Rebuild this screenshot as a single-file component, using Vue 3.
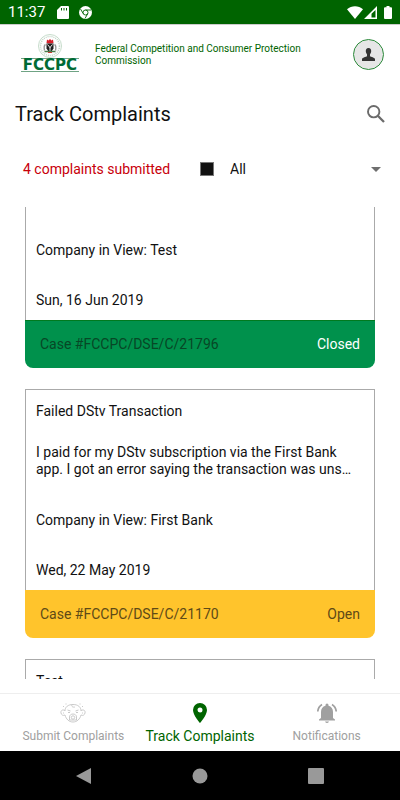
<template>
  <div class="screen">
    <div class="status-bar">
      <span class="status-time">11:37</span>
      <svg class="status-sd" width="12" height="13" viewBox="0 0 12 13">
        <path fill="#fff" fill-rule="evenodd" d="M4 0h7a1 1 0 0 1 1 1v11a1 1 0 0 1-1 1H1a1 1 0 0 1-1-1V4zM4 2v2.500h1V2zm2.500 0v2.500h1V2zM9 2v2.500h1V2z" />
      </svg>
      <svg width="13" height="13" viewBox="0 0 13 13">
        <circle cx="6.500" cy="6.500" r="6.500" fill="#fff" />
        <circle cx="6.500" cy="6.500" r="2.500" fill="none" stroke="#006400" stroke-width="0.900" />
        <path d="M6.500 4H12M4.300 7.700L1.500 3M8.700 7.700L6 12.500" stroke="#006400" stroke-width="0.900" fill="none" />
      </svg>
      <span class="spacer"></span>
      <svg class="status-wifi" width="16" height="13" viewBox="0 0 16 13">
        <path fill="#fff" d="M8 13L0 3.200C4.500-.8 11.500-.8 16 3.200z" />
      </svg>
      <svg class="status-signal" width="13" height="13" viewBox="0 0 13 13">
        <path fill="#fff" fill-rule="evenodd" d="M13 0v13H0zM11.500 4L7.500 7.800v3.700h4z" />
      </svg>
      <svg width="8" height="13" viewBox="0 0 8 13">
        <path fill="#fff" d="M2.500 0h3v1.300H7a1 1 0 0 1 1 1V12a1 1 0 0 1-1 1H1a1 1 0 0 1-1-1V2.300a1 1 0 0 1 1-1h1.500z" />
      </svg>
    </div>

    <header class="header">
      <div class="logo" role="img" aria-label="FCCPC">
        <svg width="26" height="24" viewBox="0 0 26 24">
          <circle cx="13" cy="12" r="11.500" fill="#fff" stroke="#c6dccb" />
          <circle cx="13" cy="12" r="9.500" fill="none" stroke="#c3d6c7" stroke-width="1.500" stroke-dasharray="1 1" />
          <path d="M10 5.500l1.500 1L13 5l1.500 1.500 1.500-1 .5 3.500-2 .5h-3l-2-.5z" fill="#d5202b" />
          <path d="M9.500 9.500h7v5q-1 2.500-3.500 3.500-2.500-1-3.500-3.500z" fill="#1f1f1f" />
          <path d="M10.500 10.500L13 13.500l2.500-3M13 13v4.500" stroke="#fff" stroke-width="0.900" fill="none" />
          <path d="M8.500 10.500q-2 1-1 6M17.500 10.500q2 1 1 6" stroke="#999" stroke-width="1.400" fill="none" />
          <path d="M7.500 17.500h11" stroke="#497b48" stroke-width="1.500" />
          <path d="M11 18.500h4" stroke="#c43b32" />
        </svg>
        <span class="logo-text">FCCPC</span>
      </div>
      <span class="org-name">Federal Competition and Consumer Protection Commission</span>
      <button type="button" class="avatar" aria-label="Profile">
        <svg width="13" height="13" viewBox="0 0 13 13">
          <path fill="#333" d="M6.500 0C8.500 0 9.300 1.400 9.200 3.200 9.100 4.800 8.500 5.600 8 6.200v2c1 1 4.600 1 5 2.800v2H0v-2c.4-1.800 4-1.800 5-2.800v-2C4.500 5.600 3.900 4.800 3.800 3.200 3.700 1.400 4.500 0 6.500 0z" />
        </svg>
      </button>
    </header>

    <div class="title-row">
      <h1>Track Complaints</h1>
      <button type="button" class="icon-button" aria-label="Search">
        <svg width="18" height="18" viewBox="0 0 18 18">
          <circle cx="6.700" cy="6.700" r="5.700" fill="none" stroke="#6b6b6b" stroke-width="1.900" />
          <path d="M10.800 10.800L17 17" stroke="#6b6b6b" stroke-width="2.300" />
        </svg>
      </button>
    </div>

    <div class="filter-row">
      <span class="count">{{ total }} complaints submitted</span>
      <span class="swatch"></span>
      <div class="select-wrap">
        <select v-model="filter" aria-label="Filter by status">
          <option v-for="option in options" :key="option" :value="option">{{ option }}</option>
        </select>
        <svg class="caret" width="10" height="5" viewBox="0 0 10 5">
          <path fill="#6f6f6f" d="M0 0h10L5 5z" />
        </svg>
      </div>
    </div>

    <main ref="list" class="list">
      <article v-for="(item, index) in visible" :key="index" class="card">
        <div class="card-body">
          <h2>{{ item.title }}</h2>
          <p class="description">{{ item.description }}</p>
          <p v-if="item.company" class="company">Company in View: {{ item.company }}</p>
          <p class="date">{{ item.date }}</p>
        </div>
        <div v-if="item.caseNo" class="card-footer" :class="`card-footer--${item.status.toLowerCase()}`">
          <span>Case #{{ item.caseNo }}</span>
          <span class="status">{{ item.status }}</span>
        </div>
      </article>
    </main>

    <nav class="tabs">
      <a href="#submit" class="tab">
        <svg width="26" height="20" viewBox="0 0 26 20" fill="none" stroke="#c4c4c4" stroke-width="0.900">
          <path d="M5 8C5 4 8 1.500 13 1.500S21 4 21 8M5 7.500C2 6 .5 8 1 10s2 3 4 2M21 7.500c3-1.500 4.500.5 4 2.500s-2 3-4 2M5 12c1 4 4 7 8 7s7-3 8-7" />
          <path d="M12 1.500c-1 2 1 3 3 2.500M7.500 7l3 1M18.500 7l-3 1M8 9.500h2M16 9.500h2" />
          <path d="M9.500 17v-3c0-4 7-4 7 0v3z" />
          <circle cx="13" cy="14.500" r="1.700" />
          <path d="M3 3l1 1M23 3l-1 1M6 .5v1M20 .5v1M3 10h1M22 10h1" />
        </svg>
        <span>Submit Complaints</span>
      </a>
      <a href="#track" class="tab tab--active" aria-current="page">
        <svg width="14" height="20" viewBox="0 0 14 20">
          <path fill="#006400" fill-rule="evenodd" d="M7 0a7 7 0 0 0-7 7c0 5.200 7 13 7 13s7-7.800 7-13a7 7 0 0 0-7-7zm0 4.500a2.500 2.500 0 1 1 0 5 2.500 2.500 0 0 1 0-5z" />
        </svg>
        <span>Track Complaints</span>
      </a>
      <a href="#notifications" class="tab">
        <svg width="20" height="20" viewBox="0 0 20 20">
          <path fill="#a0a0a0" d="M10 20a2 2 0 0 0 2-1.500H8A2 2 0 0 0 10 20zM16 15V9c0-3-1.600-5.600-4.500-6.200v-.8a1.500 1.500 0 0 0-3 0v.8C5.600 3.400 4 6 4 9v6l-2 1.500v1h16v-1z" />
          <path d="M5 1.500Q1 4 .8 8.500M15 1.500q4 2.500 4.200 7" fill="none" stroke="#a0a0a0" stroke-width="1.700" />
        </svg>
        <span>Notifications</span>
      </a>
    </nav>

    <div class="system-nav">
      <button type="button" aria-label="Back">
        <svg width="16" height="16" viewBox="0 0 16 16"><path fill="#999" d="M15 0v16L0 8z" /></svg>
      </button>
      <button type="button" aria-label="Home">
        <svg width="16" height="16" viewBox="0 0 16 16"><circle cx="8" cy="8" r="7.500" fill="#999" /></svg>
      </button>
      <button type="button" aria-label="Recent apps">
        <svg width="16" height="16" viewBox="0 0 16 16"><rect width="16" height="16" rx="1" fill="#999" /></svg>
      </button>
    </div>
  </div>
</template>

<script setup>
import { computed, onMounted, ref } from 'vue'

const complaints = [
  {
    company: 'Test',
    date: 'Sun, 16 Jun 2019',
    caseNo: 'FCCPC/DSE/C/21796',
    status: 'Closed'
  },
  {
    title: 'Failed DStv Transaction',
    description: 'I paid for my DStv subscription via the First Bank app. I got an error saying the transaction was uns…',
    company: 'First Bank',
    date: 'Wed, 22 May 2019',
    caseNo: 'FCCPC/DSE/C/21170',
    status: 'Open'
  },
  {
    title: 'Test'
  }
]

const options = ['All', 'Open', 'Closed']
const total = 4
const filter = ref('All')
const list = ref(null)

const visible = computed(() =>
  filter.value === 'All' ? complaints : complaints.filter((item) => item.status === filter.value)
)

onMounted(() => {
  list.value.scrollTop = 88
})
</script>

<style>
body {
  margin: 0;
  background: #fff;
}
</style>

<style scoped>
.screen {
  display: flex;
  flex-direction: column;
  height: 100vh;
  font-family: Roboto, 'Liberation Sans', sans-serif;
  font-size: 14px;
  line-height: 17px;
  color: #111;
  background: #fff;
}

button {
  display: flex;
  align-items: center;
  justify-content: center;
  padding: 0;
  border: none;
  background: none;
  cursor: pointer;
}

.status-bar {
  display: flex;
  align-items: center;
  flex: none;
  height: 24px;
  padding: 0 8px;
  background: #006400;
  color: #fff;
}

.status-time {
  font-size: 15px;
}

.status-sd {
  margin: 0 10px 0 12px;
}

.spacer {
  flex: 1;
}

.status-signal {
  margin: 0 7px 0 1px;
}

.header {
  display: flex;
  align-items: center;
  flex: none;
  height: 60px;
  padding: 0 16px 0 21px;
  border-top: 1px solid #ccc;
  box-sizing: border-box;
}

.logo {
  display: flex;
  flex: none;
  flex-direction: column;
  align-items: center;
  width: 58px;
  padding-bottom: 4px;
}

.logo-text {
  width: 100%;
  border: 1px solid #6fa384;
  border-width: 1px 0;
  font-family: 'DejaVu Sans', sans-serif;
  font-size: 15px;
  font-weight: bold;
  line-height: 12px;
  text-align: center;
  color: #006b35;
}

.org-name {
  flex: 1;
  margin: 0 40px 0 16px;
  font-size: 10px;
  line-height: 12px;
  color: #006400;
}

.avatar {
  flex: none;
  width: 31px;
  height: 31px;
  border: 1px solid #2b8a3a;
  border-radius: 50%;
  background: #e6e6e6;
}

.title-row {
  display: flex;
  align-items: center;
  justify-content: space-between;
  flex: none;
  height: 60px;
  padding: 0 15px;
}

h1 {
  margin: 0;
  font-size: 20px;
  line-height: 24px;
  font-weight: 400;
}

.filter-row {
  display: flex;
  align-items: center;
  flex: none;
  height: 50px;
  margin-bottom: 13px;
  padding: 0 19px 0 23px;
}

.count {
  flex: 0 0 152px;
  color: #c8000a;
}

.swatch {
  width: 12px;
  height: 12px;
  margin-left: 25px;
  border: 1px solid #777;
  background: #111;
  box-sizing: content-box;
}

.select-wrap {
  position: relative;
  display: flex;
  align-items: center;
  flex: 1;
  margin-left: 16px;
}

select {
  width: 100%;
  height: 32px;
  padding: 0;
  border: none;
  background: transparent;
  font: inherit;
  color: inherit;
  appearance: none;
}

.caret {
  position: absolute;
  right: 0;
  pointer-events: none;
}

.list {
  flex: 1;
  min-height: 0;
  margin-bottom: 14px;
  padding: 0 25px;
  overflow-y: auto;
  scrollbar-width: none;
}

.card {
  margin-bottom: 21px;
  border-radius: 0 0 8px 8px;
  overflow: hidden;
}

.card-body {
  height: 201px;
  padding: 13px 10px 0;
  border: 1px solid #aaa;
  border-bottom: none;
  box-sizing: border-box;
}

h2 {
  height: 17px;
  margin: 0 0 24px;
  font-size: 14px;
  font-weight: 400;
}

.card p {
  margin: 0;
}

.card .description {
  height: 34px;
  margin-bottom: 34px;
}

.card .company {
  margin-bottom: 33px;
}

.card-footer {
  display: flex;
  align-items: center;
  justify-content: space-between;
  height: 48px;
  padding: 0 15px;
  box-sizing: border-box;
}

.card-footer--closed {
  border-top: 1px solid #007a1f;
  background: #00914c;
  color: #074726;
}

.card-footer--closed .status {
  color: #fff;
}

.card-footer--open {
  background: #ffc42c;
  color: #5e4a17;
}

.tabs {
  display: flex;
  flex: none;
  height: 58px;
  padding: 0 10px;
  border-top: 1px solid #eee;
  box-sizing: border-box;
}

.tab {
  display: flex;
  flex: 1;
  flex-direction: column;
  align-items: center;
  justify-content: flex-end;
  gap: 5px;
  padding-bottom: 6px;
  font-size: 12px;
  color: #a0a0a0;
  text-decoration: none;
  white-space: nowrap;
}

.tab--active {
  font-size: 14px;
  color: #006400;
}

.system-nav {
  display: flex;
  align-items: center;
  justify-content: space-between;
  flex: none;
  height: 49px;
  padding: 0 76px;
  background: #000;
}
</style>
